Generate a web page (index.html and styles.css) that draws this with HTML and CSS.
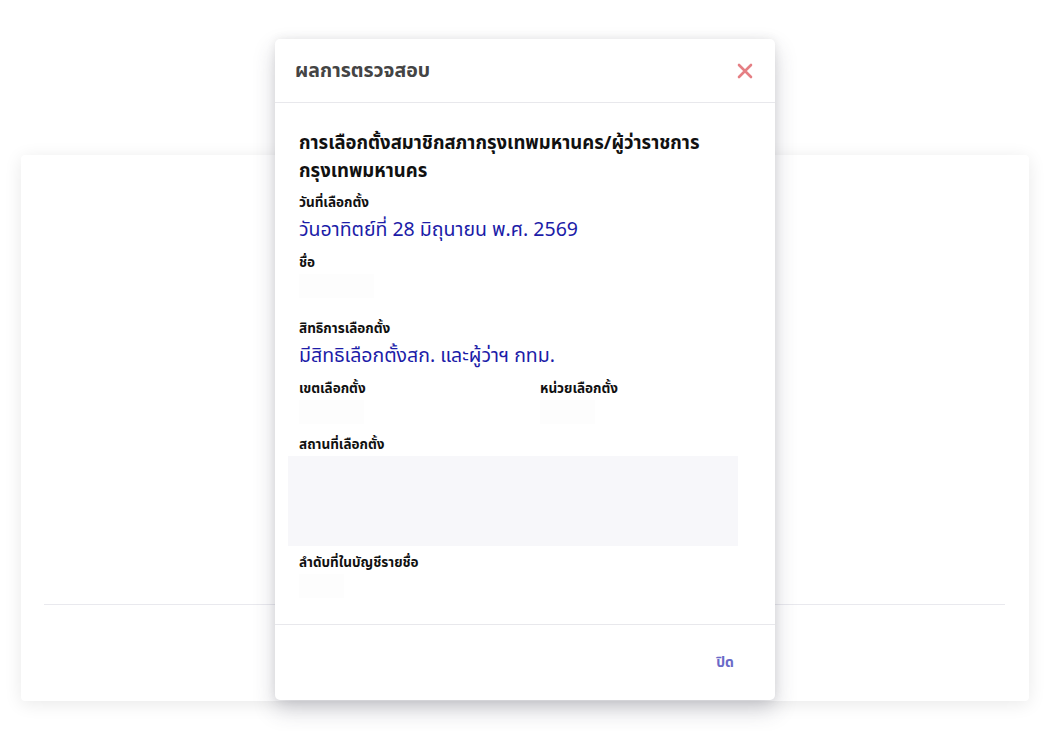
FILE: index.html
```html
<!DOCTYPE html>
<html lang="th">
<head>
<meta charset="utf-8">
<title>ผลการตรวจสอบ</title>
<link rel="stylesheet" href="styles.css">
</head>
<body>
<div class="page">
  <div class="card">
    <div class="card-rule"></div>
  </div>
</div>

<div class="modal">
  <div class="modal-header">
    <h2 class="modal-title">ผลการตรวจสอบ</h2>
    <button class="close-x" aria-label="close">
      <svg width="16" height="16" viewBox="0 0 16 16"><path d="M2 2 L14 14 M14 2 L2 14" stroke="#e57f84" stroke-width="2.6" stroke-linecap="round" fill="none"/></svg>
    </button>
  </div>
  <div class="modal-body">
    <div class="election-title">การเลือกตั้งสมาชิกสภากรุงเทพมหานคร/ผู้ว่าราชการกรุงเทพมหานคร</div>
    <div class="field">
      <div class="label">วันที่เลือกตั้ง</div>
      <div class="value">วันอาทิตย์ที่ 28 มิถุนายน พ.ศ. 2569</div>
    </div>
    <div class="field tall">
      <div class="label">ชื่อ</div>
      <div class="value"><span class="blur w70"></span></div>
    </div>
    <div class="field">
      <div class="label">สิทธิการเลือกตั้ง</div>
      <div class="value">มีสิทธิเลือกตั้งสก. และผู้ว่าฯ กทม.</div>
    </div>
    <div class="field cols">
      <div>
        <div class="label">เขตเลือกตั้ง</div>
        <div class="value"><span class="blur w60"></span></div>
      </div>
      <div>
        <div class="label">หน่วยเลือกตั้ง</div>
        <div class="value"><span class="blur w50"></span></div>
      </div>
    </div>
    <div class="field place">
      <div class="label">สถานที่เลือกตั้ง</div>
      <div class="place-box"></div>
    </div>
    <div class="field">
      <div class="label">ลำดับที่ในบัญชีรายชื่อ</div>
      <div class="value"><span class="blur w40"></span></div>
    </div>
  </div>
  <div class="modal-footer">
    <button class="btn-close">ปิด</button>
  </div>
</div>
</body>
</html>
```

FILE: styles.css
```css
* { box-sizing: border-box; }
html, body { margin: 0; padding: 0; }
body {
  background: #ffffff;
  font-family: "Noto Sans", "Noto Sans Thai", "Tahoma", "DejaVu Sans", sans-serif;
  width: 1056px;
  height: 731px;
  overflow: hidden;
  position: relative;
}
.page {
  padding: 155px 27px 0 21px;
}
.card {
  height: 546px;
  background: #fff;
  border-radius: 4px;
  box-shadow: 0 3px 18px rgba(0, 0, 0, 0.09);
  padding: 449px 24px 0 23px;
}
.card-rule {
  height: 1px;
  background: #e9e9ee;
}
.modal {
  position: absolute;
  left: 275px;
  top: 39px;
  width: 500px;
  height: 661px;
  background: #fff;
  border-radius: 5px;
  box-shadow: 0 10px 22px rgba(60, 60, 80, 0.22), 0 0 10px rgba(0, 0, 0, 0.08);
  display: flex;
  flex-direction: column;
}
.modal-header {
  height: 64px;
  border-bottom: 1px solid #e8e8ec;
  display: flex;
  align-items: center;
  justify-content: space-between;
  padding: 0 21px 0 20px;
}
.modal-title {
  margin: 0;
  font-size: 19.5px;
  font-weight: 700;
  color: #444;
}
.close-x {
  border: 0;
  background: none;
  padding: 0;
  width: 18px;
  height: 18px;
  display: flex;
  align-items: center;
  justify-content: center;
}
.modal-body {
  flex: 1;
  padding: 25px 24px 0 24px;
}
.election-title {
  font-size: 18.5px;
  font-weight: 700;
  line-height: 28px;
  color: #111;
  margin-bottom: 8px;
  padding-right: 30px;
}
.field {
  margin-bottom: 8px;
}
.field.tall .value { height: 38px; }
.label {
  font-size: 13.5px;
  font-weight: 700;
  line-height: 20px;
  color: #111;
}
.value {
  font-size: 19.5px;
  line-height: 30px;
  color: #1c1ca8;
  min-height: 30px;
  padding-top: 2px;
}
.blur {
  display: block;
  height: 24px;
  background: #fdfdfd;
}
.w70 { width: 75px; }
.w60 { width: 65px; }
.w50 { width: 55px; }
.w40 { width: 45px; }
.cols {
  display: grid;
  grid-template-columns: 1fr 1fr;
  column-gap: 30px;
  margin-bottom: 6px;
}
.field.place { margin-bottom: 6px; }
.place-box {
  margin: 2px 0 0 -11px;
  width: 450px;
  height: 90px;
  background: #f7f7fa;
}
.modal-footer {
  height: 76px;
  border-top: 1px solid #e8e8ec;
  display: flex;
  align-items: center;
  justify-content: flex-end;
  padding-right: 33px;
}
.btn-close {
  border: 0;
  background: none;
  font-family: inherit;
  font-size: 14px;
  font-weight: 700;
  color: #6a6ac8;
  padding: 6px 8px;
}
```
